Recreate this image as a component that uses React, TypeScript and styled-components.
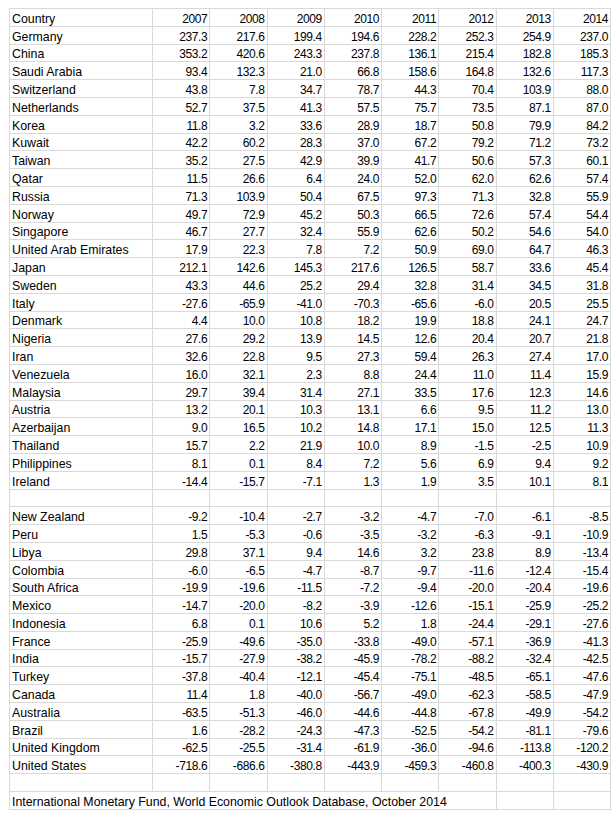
import styled, { createGlobalStyle } from "styled-components";

const GlobalStyle = createGlobalStyle`
  body {
    margin: 0;
    background: #ffffff;
    font-family: "Liberation Sans", Arial, sans-serif;
  }
`;

const Page = styled.div`
  padding: 8px 0 0 9px;
`;

const Sheet = styled.div`
  display: grid;
  grid-template-columns: 143px repeat(8, 57.25px);
  grid-auto-rows: 17.8px;
  width: max-content;
  border-top: 1px solid #d9d9d9;
  border-left: 1px solid #d9d9d9;
  color: #000000;
`;

const Cell = styled.div<{ $num?: boolean; $span?: number }>`
  box-sizing: border-box;
  display: flex;
  align-items: flex-end;
  justify-content: ${(props) => (props.$num ? "flex-end" : "flex-start")};
  padding: 0 2px 0 2px;
  border-right: 1px solid #d9d9d9;
  border-bottom: 1px solid #d9d9d9;
  white-space: nowrap;
  overflow: visible;
  line-height: 14px;
  font-size: ${(props) => (props.$num ? "12px" : "12.35px")};
  letter-spacing: ${(props) => (props.$num ? "-0.4px" : "0")};
  grid-column: ${(props) => (props.$span ? `span ${props.$span}` : "auto")};
`;

const years = ["2007", "2008", "2009", "2010", "2011", "2012", "2013", "2014"];

type Row = [string, ...string[]];

const surplus: Row[] = [
  ["Germany", "237.3", "217.6", "199.4", "194.6", "228.2", "252.3", "254.9", "237.0"],
  ["China", "353.2", "420.6", "243.3", "237.8", "136.1", "215.4", "182.8", "185.3"],
  ["Saudi Arabia", "93.4", "132.3", "21.0", "66.8", "158.6", "164.8", "132.6", "117.3"],
  ["Switzerland", "43.8", "7.8", "34.7", "78.7", "44.3", "70.4", "103.9", "88.0"],
  ["Netherlands", "52.7", "37.5", "41.3", "57.5", "75.7", "73.5", "87.1", "87.0"],
  ["Korea", "11.8", "3.2", "33.6", "28.9", "18.7", "50.8", "79.9", "84.2"],
  ["Kuwait", "42.2", "60.2", "28.3", "37.0", "67.2", "79.2", "71.2", "73.2"],
  ["Taiwan", "35.2", "27.5", "42.9", "39.9", "41.7", "50.6", "57.3", "60.1"],
  ["Qatar", "11.5", "26.6", "6.4", "24.0", "52.0", "62.0", "62.6", "57.4"],
  ["Russia", "71.3", "103.9", "50.4", "67.5", "97.3", "71.3", "32.8", "55.9"],
  ["Norway", "49.7", "72.9", "45.2", "50.3", "66.5", "72.6", "57.4", "54.4"],
  ["Singapore", "46.7", "27.7", "32.4", "55.9", "62.6", "50.2", "54.6", "54.0"],
  ["United Arab Emirates", "17.9", "22.3", "7.8", "7.2", "50.9", "69.0", "64.7", "46.3"],
  ["Japan", "212.1", "142.6", "145.3", "217.6", "126.5", "58.7", "33.6", "45.4"],
  ["Sweden", "43.3", "44.6", "25.2", "29.4", "32.8", "31.4", "34.5", "31.8"],
  ["Italy", "-27.6", "-65.9", "-41.0", "-70.3", "-65.6", "-6.0", "20.5", "25.5"],
  ["Denmark", "4.4", "10.0", "10.8", "18.2", "19.9", "18.8", "24.1", "24.7"],
  ["Nigeria", "27.6", "29.2", "13.9", "14.5", "12.6", "20.4", "20.7", "21.8"],
  ["Iran", "32.6", "22.8", "9.5", "27.3", "59.4", "26.3", "27.4", "17.0"],
  ["Venezuela", "16.0", "32.1", "2.3", "8.8", "24.4", "11.0", "11.4", "15.9"],
  ["Malaysia", "29.7", "39.4", "31.4", "27.1", "33.5", "17.6", "12.3", "14.6"],
  ["Austria", "13.2", "20.1", "10.3", "13.1", "6.6", "9.5", "11.2", "13.0"],
  ["Azerbaijan", "9.0", "16.5", "10.2", "14.8", "17.1", "15.0", "12.5", "11.3"],
  ["Thailand", "15.7", "2.2", "21.9", "10.0", "8.9", "-1.5", "-2.5", "10.9"],
  ["Philippines", "8.1", "0.1", "8.4", "7.2", "5.6", "6.9", "9.4", "9.2"],
  ["Ireland", "-14.4", "-15.7", "-7.1", "1.3", "1.9", "3.5", "10.1", "8.1"],
];

const deficit: Row[] = [
  ["New Zealand", "-9.2", "-10.4", "-2.7", "-3.2", "-4.7", "-7.0", "-6.1", "-8.5"],
  ["Peru", "1.5", "-5.3", "-0.6", "-3.5", "-3.2", "-6.3", "-9.1", "-10.9"],
  ["Libya", "29.8", "37.1", "9.4", "14.6", "3.2", "23.8", "8.9", "-13.4"],
  ["Colombia", "-6.0", "-6.5", "-4.7", "-8.7", "-9.7", "-11.6", "-12.4", "-15.4"],
  ["South Africa", "-19.9", "-19.6", "-11.5", "-7.2", "-9.4", "-20.0", "-20.4", "-19.6"],
  ["Mexico", "-14.7", "-20.0", "-8.2", "-3.9", "-12.6", "-15.1", "-25.9", "-25.2"],
  ["Indonesia", "6.8", "0.1", "10.6", "5.2", "1.8", "-24.4", "-29.1", "-27.6"],
  ["France", "-25.9", "-49.6", "-35.0", "-33.8", "-49.0", "-57.1", "-36.9", "-41.3"],
  ["India", "-15.7", "-27.9", "-38.2", "-45.9", "-78.2", "-88.2", "-32.4", "-42.5"],
  ["Turkey", "-37.8", "-40.4", "-12.1", "-45.4", "-75.1", "-48.5", "-65.1", "-47.6"],
  ["Canada", "11.4", "1.8", "-40.0", "-56.7", "-49.0", "-62.3", "-58.5", "-47.9"],
  ["Australia", "-63.5", "-51.3", "-46.0", "-44.6", "-44.8", "-67.8", "-49.9", "-54.2"],
  ["Brazil", "1.6", "-28.2", "-24.3", "-47.3", "-52.5", "-54.2", "-81.1", "-79.6"],
  ["United Kingdom", "-62.5", "-25.5", "-31.4", "-61.9", "-36.0", "-94.6", "-113.8", "-120.2"],
  ["United States", "-718.6", "-686.6", "-380.8", "-443.9", "-459.3", "-460.8", "-400.3", "-430.9"],
];

function DataRow({ row }: { row: Row }) {
  const [name, ...values] = row;
  return (
    <>
      <Cell>{name}</Cell>
      {values.map((v, i) => (
        <Cell key={i} $num>
          {v}
        </Cell>
      ))}
    </>
  );
}

function BlankRow() {
  return (
    <>
      {Array.from({ length: 9 }).map((_, i) => (
        <Cell key={i} />
      ))}
    </>
  );
}

export default function App() {
  return (
    <>
      <GlobalStyle />
      <Page>
        <Sheet>
          <Cell>Country</Cell>
          {years.map((y) => (
            <Cell key={y} $num>
              {y}
            </Cell>
          ))}
          {surplus.map((r) => (
            <DataRow key={r[0]} row={r} />
          ))}
          <BlankRow />
          {deficit.map((r) => (
            <DataRow key={r[0]} row={r} />
          ))}
          <BlankRow />
          <Cell $span={7}>International Monetary Fund, World Economic Outlook Database, October 2014</Cell>
          <Cell />
          <Cell />
        </Sheet>
      </Page>
    </>
  );
}
